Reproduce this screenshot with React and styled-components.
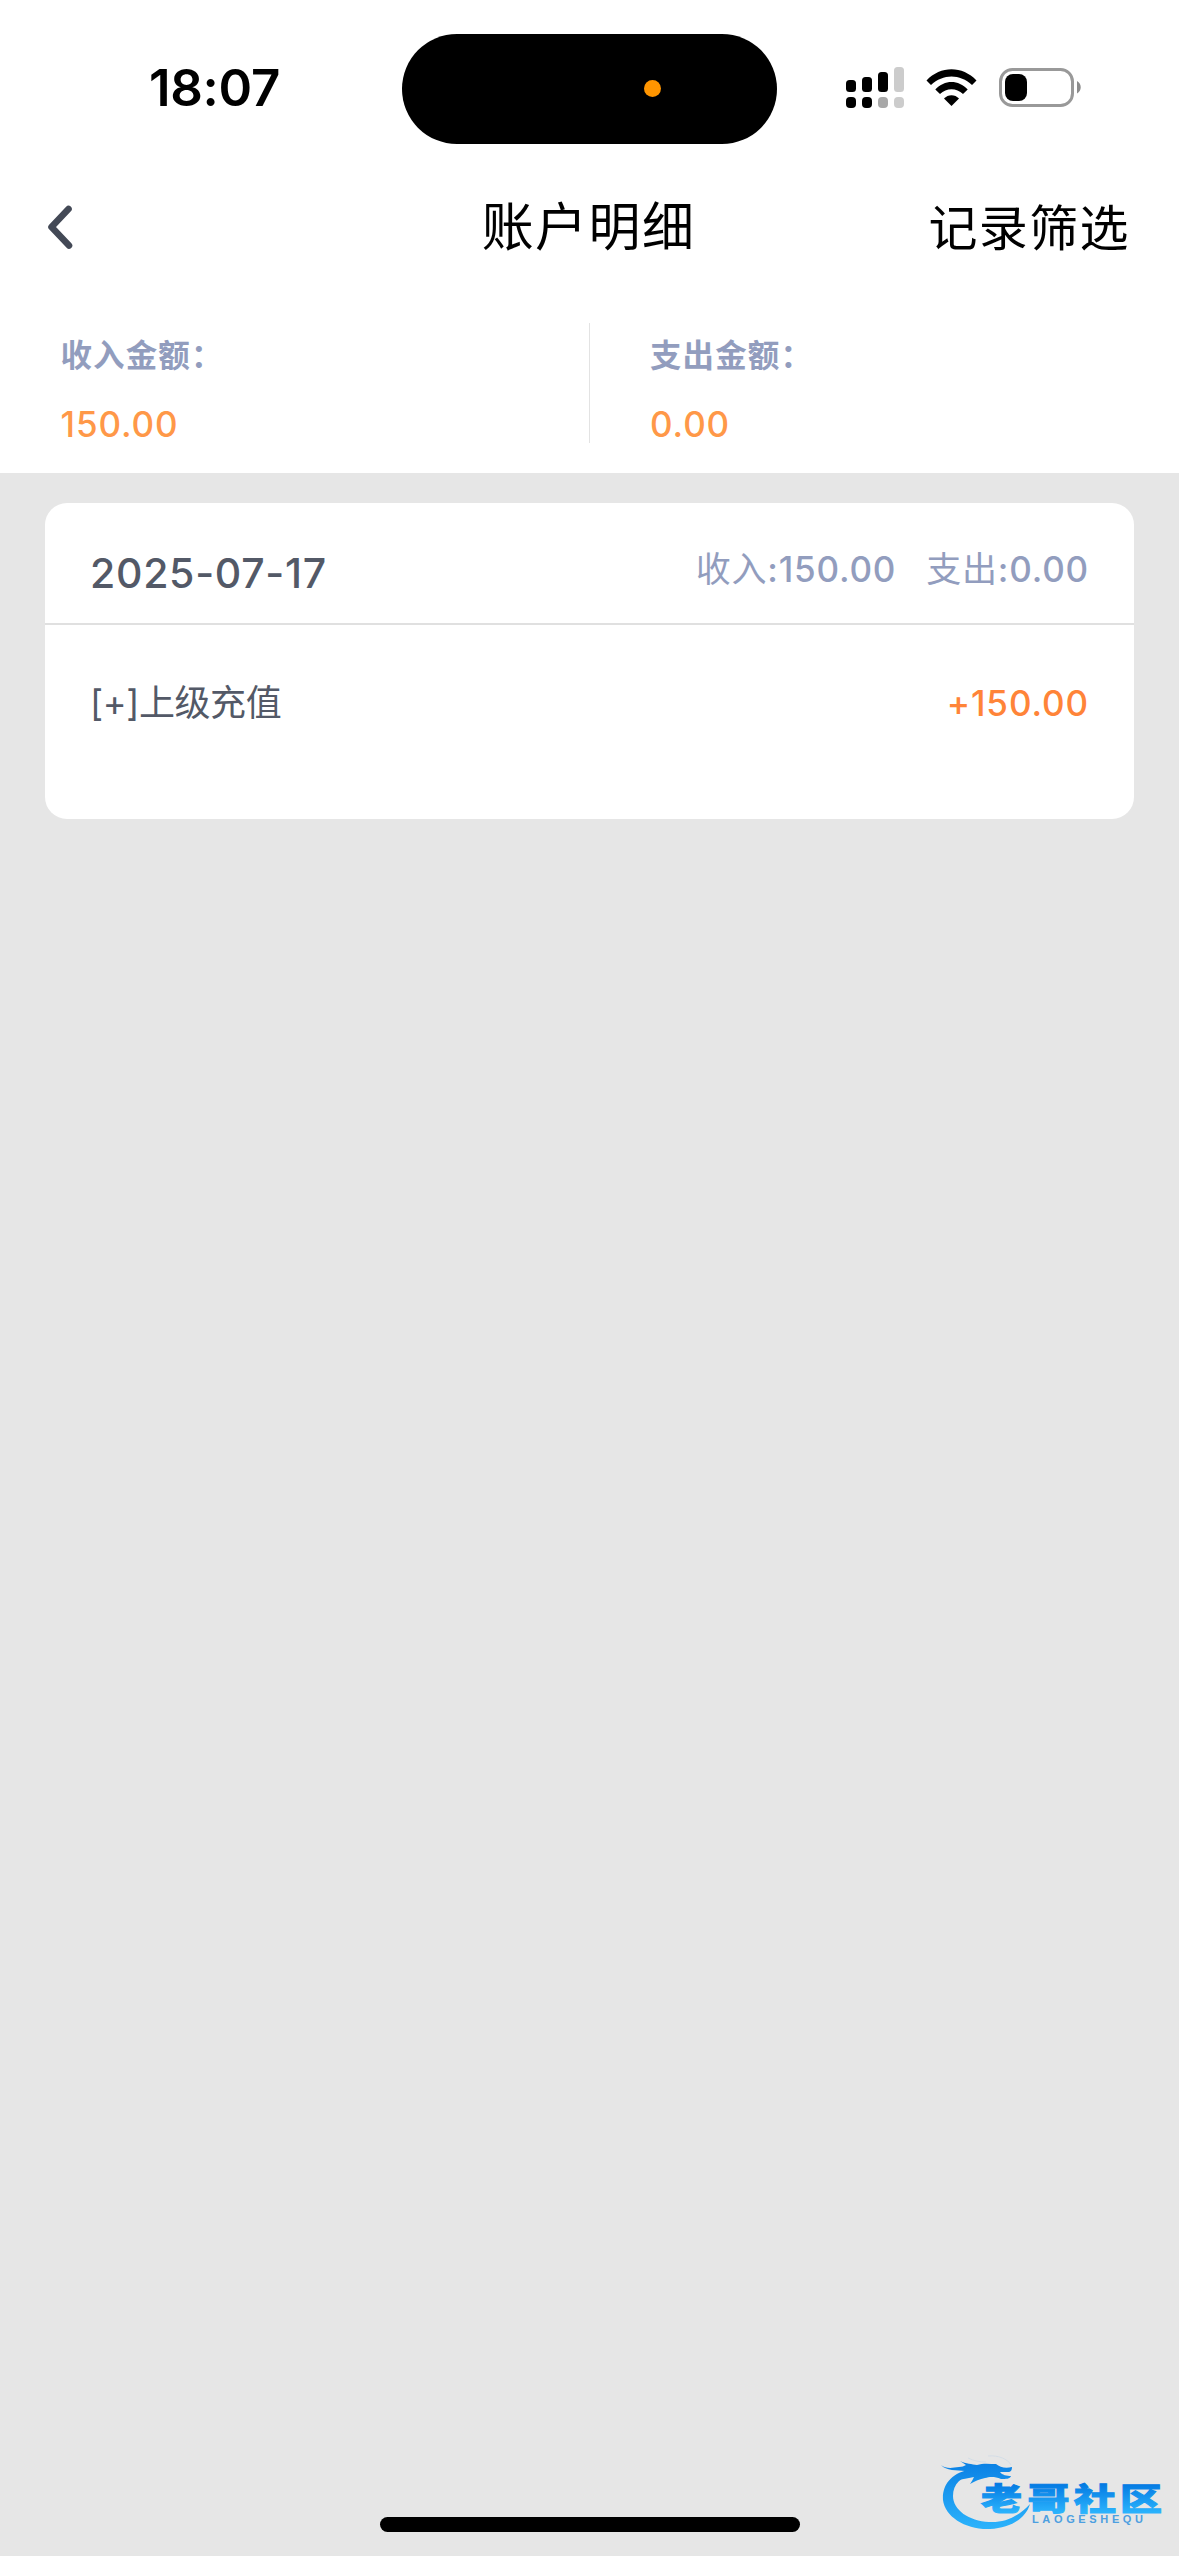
import React from 'react';
import styled, { createGlobalStyle } from 'styled-components';

const GlobalStyle = createGlobalStyle`
* {
box-sizing: border-box;
}
body {
margin: 0;
background-color: #e6e6e6;
font-family: Inter, "Noto Sans CJK SC", sans-serif;
}
`;

const Page = styled.div`
display: flex;
flex-direction: column;
width: 1179px;
height: 2556px;
background-color: #e6e6e6;
overflow: hidden;
position: relative;
`;

const StatusBar = styled.div`
display: grid;
grid-template-columns: 402px 375px 402px;
align-items: center;
height: 177px;
background-color: #fff;
`;

const Time = styled.div`
margin-bottom: 1px;
padding-left: 149px;
font-size: 51px;
font-weight: 600;
line-height: 60px;
letter-spacing: -0.3px;
color: #000;
`;

const Island = styled.div`
display: flex;
align-items: center;
justify-content: flex-end;
height: 110px;
padding-right: 116px;
border-radius: 55px;
background-color: #000;
`;

const MicDot = styled.div`
width: 17px;
height: 17px;
border-radius: 50%;
background-color: #ff9500;
`;

const StatusIcons = styled.div`
display: flex;
align-items: center;
margin-bottom: 2px;
padding-left: 69px;
`;

const NavBar = styled.div`
display: grid;
grid-template-columns: 1fr auto 1fr;
align-items: center;
height: 99px;
padding: 2px 49px 0 45px;
background-color: #fff;
`;

const BackButton = styled.button`
display: flex;
padding: 0 0 1px;
border: none;
background: none;
cursor: pointer;
`;

const Title = styled.h1`
margin: 1px 0 0 2px;
font-size: 52px;
font-weight: 400;
line-height: 60px;
letter-spacing: 1.4px;
color: #000;
`;

const FilterButton = styled.button`
justify-self: end;
margin-top: 2px;
padding: 0;
border: none;
background: none;
font-family: inherit;
font-size: 49px;
line-height: 60px;
letter-spacing: 1.4px;
color: #000;
cursor: pointer;
`;

const Summary = styled.div`
display: flex;
height: 197px;
padding-top: 47px;
background-color: #fff;
`;

const SummaryCell = styled.div`
display: flex;
flex-direction: column;
gap: 22px;
width: 590px;
height: 120px;
padding: 10px 0 0 60.5px;
border-right: ${(props) => (props.$divider ? '1px solid #e3e3e3' : 'none')};
`;

const SummaryLabel = styled.div`
font-size: 31.5px;
font-weight: 700;
line-height: 46px;
letter-spacing: 1.1px;
color: #929dbe;
`;

const SummaryAmount = styled.div`
font-size: 35px;
font-weight: 500;
line-height: 46px;
letter-spacing: 0.9px;
color: #ff9848;
`;

const Content = styled.main`
flex: 1;
padding: 30px 45px;
`;

const Card = styled.section`
height: 316px;
border-radius: 22px;
background-color: #fff;
`;

const CardHeader = styled.div`
display: flex;
justify-content: space-between;
align-items: flex-start;
height: 122px;
padding: 44px 45px 0 45px;
border-bottom: 2px solid #e0e0e0;
`;

const DateText = styled.div`
font-size: 41px;
font-weight: 500;
line-height: 53px;
letter-spacing: 0.7px;
color: #535967;
`;

const Totals = styled.div`
display: flex;
gap: 30px;
font-size: 35px;
font-weight: 500;
line-height: 45px;
letter-spacing: 0.8px;
color: #929dbe;
`;

const TotalLabel = styled.span`
font-weight: 400;
`;

const Record = styled.div`
display: flex;
justify-content: space-between;
padding: 56px 45px 0 45px;
line-height: 45px;
`;

const RecordName = styled.div`
font-size: 36px;
font-weight: 400;
letter-spacing: -0.4px;
color: #535967;
`;

const RecordAmount = styled.div`
font-size: 35px;
font-weight: 500;
letter-spacing: 0.9px;
color: #ff8438;
`;

const HomeIndicator = styled.div`
position: absolute;
left: 380px;
bottom: 24px;
width: 420px;
height: 15px;
border-radius: 8px;
background-color: #000;
`;

const Watermark = styled.div`
position: absolute;
right: 0;
bottom: 0;
width: 259px;
height: 116px;
`;

const SignalIcon = () => (
  <svg width="59" height="42" viewBox="0 0 59 42">
    <rect x="0" y="13" width="10" height="12" rx="3.5" />
    <rect x="16" y="10" width="10" height="15" rx="3.5" />
    <rect x="32" y="5" width="10" height="20" rx="3.5" />
    <rect x="48" y="0" width="10" height="25" rx="3.5" fill="#ccc" />
    <rect x="0" y="30" width="10" height="11" rx="4" />
    <rect x="16" y="30" width="10" height="11" rx="4" />
    <rect x="32" y="30" width="10" height="11" rx="4" fill="#a8a8a8" />
    <rect x="48" y="30" width="10" height="11" rx="4" fill="#ccc" />
  </svg>
);

const WifiIcon = styled(({ className }) => (
  <svg className={className} width="51" height="38" viewBox="0 0 51 38">
    <path d="M0.5 11.5C14.5-3.5 36.5-3.5 50.5 11.5L46 16C34 4.500 17 4.500 5 16Z" />
    <path d="M9.300 20.500C18.500 10.500 32.500 10.500 41.700 20.500L37 25C30.500 18.500 20.500 18.500 14 25Z" />
    <path d="M18 29.500C22 25 29 25 33 29.500L25.500 37Z" />
  </svg>
))`
margin-left: 21px;
`;

const BatteryIcon = styled(({ className }) => (
  <svg className={className} width="83" height="40" viewBox="0 0 83 40">
    <rect x="1.500" y="1.500" width="72" height="36" rx="12" fill="none" stroke="#999" strokeWidth="3" />
    <rect x="6" y="6" width="22" height="27" rx="8" />
    <path d="M78 13C83 15.500 83 23 78 25.500Z" fill="#8c8c8c" />
  </svg>
))`
margin-left: 22px;
`;

const BackIcon = () => (
  <svg width="30" height="46" viewBox="0 0 30 46">
    <path
      d="M23.500 5L6.500 23L24 41.500"
      fill="none"
      stroke="#434956"
      strokeWidth="6.600"
      strokeLinecap="round"
      strokeLinejoin="round"
    />
  </svg>
);

const DragonLogo = () => (
  <svg width="259" height="116" viewBox="0 0 259 116">
    <defs>
      <linearGradient id="ring" x1="0" y1="22" x2="0" y2="90" gradientUnits="userSpaceOnUse">
        <stop offset="0" stopColor="#0a80e4" />
        <stop offset="1" stopColor="#2cb4fc" />
      </linearGradient>
      <linearGradient id="word" x1="0" y1="43" x2="0" y2="72" gradientUnits="userSpaceOnUse">
        <stop offset="0" stopColor="#0278e2" />
        <stop offset="1" stopColor="#2ab2fc" />
      </linearGradient>
    </defs>
    {/* tail and body */}
    <path
      d="M48 30C30 34 22 46 23 60C25 77 46 90 70 89C91 88 106 78 110 64C98 77 84 83 69 82C49 81 33 70 33 56C33 44 41 36 56 34Z"
      fill="url(#ring)"
    />
    {/* head with whiskers */}
    <path
      d="M21 25C26 29 32 28 39 27C42 27 44 26 46 25L40 21C46 24 52 24 57 25C63 23 70 24 76 24C80 27 85 29 92 27C92 30 91 32 88 32L80 32C82 35 87 36 91 36C90 39 86 39 81 39C74 36 69 37 65 38C60 39 55 41 50 44C52 41 53 39 54 37C49 38 44 39 38 40C40 36 42 34 45 31C37 30 26 31 21 25Z"
      fill="url(#ring)"
    />
    <path d="M48 18C54 21 60 22 66 22M68 16C78 15 88 19 91 25" fill="none" stroke="#cfdbe6" strokeWidth="0.8" />
    <g
      fill="url(#word)"
      stroke="url(#word)"
      strokeWidth="1"
      fontFamily="'Noto Sans CJK SC', sans-serif"
      fontSize="31"
      fontWeight="900"
    >
      <text x="61" y="69.500" textLength="41" lengthAdjust="spacingAndGlyphs">老</text>
      <text x="107.500" y="69.500" textLength="42" lengthAdjust="spacingAndGlyphs">哥</text>
      <text x="154" y="69.500" textLength="42" lengthAdjust="spacingAndGlyphs">社</text>
      <text x="200" y="69.500" textLength="42" lengthAdjust="spacingAndGlyphs">区</text>
    </g>
    <text
      x="112"
      y="82.500"
      textLength="111"
      fill="#4d9fe0"
      fontFamily="'Liberation Sans', sans-serif"
      fontSize="11"
      fontWeight="700"
    >
      LAOGESHEQU
    </text>
  </svg>
);

const summary = [
  { label: '收入金额：', amount: '150.00' },
  { label: '支出金额：', amount: '0.00' },
];

const totals = [
  { label: '收入', amount: '150.00' },
  { label: '支出', amount: '0.00' },
];

const App = () => {
return (
    <>
      <GlobalStyle />
      <Page>
        <StatusBar>
          <Time>18:07</Time>
          <Island>
            <MicDot />
          </Island>
          <StatusIcons>
            <SignalIcon />
            <WifiIcon />
            <BatteryIcon />
          </StatusIcons>
        </StatusBar>
        <NavBar>
          <BackButton aria-label="返回">
            <BackIcon />
          </BackButton>
          <Title>账户明细</Title>
          <FilterButton>记录筛选</FilterButton>
        </NavBar>
        <Summary>
          {summary.map((item, index) => (
            <SummaryCell key={item.label} $divider={index === 0}>
              <SummaryLabel>{item.label}</SummaryLabel>
              <SummaryAmount>{item.amount}</SummaryAmount>
            </SummaryCell>
          ))}
        </Summary>
        <Content>
          <Card>
            <CardHeader>
              <DateText>2025-07-17</DateText>
              <Totals>
                {totals.map((item) => (
                  <span key={item.label}>
                    <TotalLabel>{item.label}</TotalLabel>:{item.amount}
                  </span>
                ))}
              </Totals>
            </CardHeader>
            <Record>
              <RecordName>[+]上级充值</RecordName>
              <RecordAmount>+150.00</RecordAmount>
            </Record>
          </Card>
        </Content>
        <HomeIndicator />
        <Watermark>
          <DragonLogo />
        </Watermark>
      </Page>
    </>
  );
};

export default App;
